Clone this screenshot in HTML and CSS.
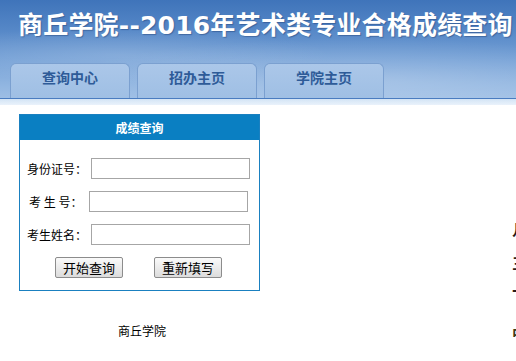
FILE: index.html
```html
<!DOCTYPE html>
<html lang="zh-CN">
<head>
<meta charset="utf-8">
<title>商丘学院--2016年艺术类专业合格成绩查询</title>
<link rel="stylesheet" href="styles.css">
</head>
<body>
<div class="header">
  <h1 class="title">商丘学院--2016年艺术类专业合格成绩查询</h1>
  <ul class="tabs">
    <li class="tab">查询中心</li>
    <li class="tab">招办主页</li>
    <li class="tab">学院主页</li>
  </ul>
</div>
<div class="band"></div>
<div class="main">
  <div class="left">
    <div class="box">
      <div class="box-head">成绩查询</div>
      <form class="box-body">
        <div class="row"><span class="label">身份证号：</span><input class="field" type="text"></div>
        <div class="row"><span class="label narrow">考 生 号：</span><input class="field" type="text"></div>
        <div class="row"><span class="label">考生姓名：</span><input class="field" type="text"></div>
        <div class="actions">
          <button class="btn" type="button">开始查询</button>
          <button class="btn" type="button">重新填写</button>
        </div>
      </form>
    </div>
    <div class="footer">商丘学院</div>
  </div>
  <div class="right">
    <p class="r1">几</p>
    <p class="r2">三</p>
    <p class="r3">十</p>
    <p class="r4">中</p>
  </div>
</div>
</body>
</html>
```
FILE: styles.css
```css
html {
  overflow: hidden;
}
body {
  margin: 0;
  background: #fff;
  font-family: "Noto Sans CJK SC", "Liberation Sans", sans-serif;
  font-size: 12px;
  color: #000;
}
.header {
  height: 98px;
  border-bottom: 1px solid #4a7cc0;
  background:
    radial-gradient(ellipse 420px 60px at 360px 80px, rgba(255,255,255,0.22), rgba(255,255,255,0) 70%),
    radial-gradient(ellipse 300px 40px at 120px 55px, rgba(255,255,255,0.15), rgba(255,255,255,0) 70%),
    linear-gradient(180deg, #3f74ba 0%, #5587c7 30%, #74a0d6 60%, #8fb4e0 85%, #9dbee5 100%);
  display: flex;
  flex-direction: column;
  overflow: hidden;
}
.title {
  margin: 0;
  padding: 9px 0 0 18px;
  height: 51px;
  box-sizing: border-box;
  font-family: "DejaVu Sans", "Noto Sans CJK SC", sans-serif;
  font-size: 25px;
  line-height: 34px;
  font-weight: bold;
  color: #fff;
  white-space: nowrap;
  text-shadow: 1px 1px 1px rgba(30,60,110,0.45);
  letter-spacing: 0.2px;
}
.tabs {
  list-style: none;
  margin: 12px 0 0 10px;
  padding: 0;
  display: flex;
  gap: 7px;
  flex: 1;
}
.tab {
  width: 120px;
  height: 100%;
  box-sizing: border-box;
  border: 1px solid #7ba0d0;
  border-bottom: none;
  border-radius: 6px 6px 0 0;
  background: linear-gradient(180deg, #abc7e9 0%, #9fbfe4 100%);
  color: #2e5b98;
  font-size: 14px;
  font-weight: bold;
  text-align: center;
  line-height: 26px;
}
.band {
  height: 6px;
  background: linear-gradient(180deg, #d3e4f5, #eaf2fb);
}
.main {
  display: flex;
  width: 900px;
}
.left {
  width: 512px;
  flex-shrink: 0;
}
.box {
  margin: 9px 0 0 19px;
  width: 241px;
  box-sizing: border-box;
  border: 1px solid #1a80c0;
}
.box-head {
  height: 25px;
  background: #0a7fc2;
  color: #fff;
  font-weight: bold;
  font-size: 12px;
  line-height: 25px;
  text-align: center;
}
.box-body {
  margin: 0;
  padding: 18px 0 12px;
}
.row {
  display: flex;
  justify-content: center;
  align-items: center;
  height: 21px;
  margin-bottom: 12px;
  padding-right: 2px;
}
.label {
  width: 64px;
  font-size: 12px;
  white-space: pre;
}
.label.narrow {
  width: 60px;
}
.field {
  width: 159px;
  height: 21px;
  box-sizing: border-box;
  margin: 0;
  border: 1px solid #a6a6a6;
  padding: 0 2px;
}
.actions {
  display: flex;
  justify-content: center;
  gap: 31px;
  padding-right: 2px;
}
.btn {
  width: 68px;
  height: 21px;
  margin: 0;
  padding: 0;
  border: 1px solid #8c8c8c;
  border-radius: 2px;
  background: linear-gradient(180deg, #fafafa, #dcdcdc);
  font-family: "Noto Sans CJK SC", sans-serif;
  font-size: 13px;
  color: #000;
  line-height: 19px;
}
.footer {
  margin: 32px 0 0 19px;
  width: 246px;
  text-align: center;
  font-size: 12px;
  line-height: 16px;
}
.right {
  width: 300px;
  flex-shrink: 0;
  padding-top: 114px;
}
.right p {
  margin: 0;
  font-size: 15px;
  font-weight: bold;
  color: #2a1a1a;
  line-height: 20px;
}
.right .r2 { margin-top: 14px; }
.right .r3 { margin-top: 8px; }
.right .r4 { margin-top: 22px; color: #3a3a1a; }
```
